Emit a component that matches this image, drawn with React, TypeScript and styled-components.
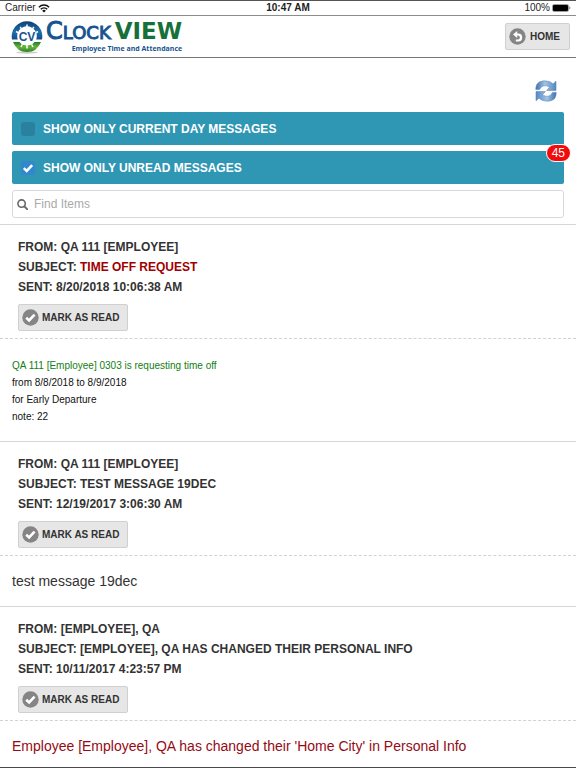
import React, { useState } from "react";
import styled, { createGlobalStyle } from "styled-components";

const GlobalStyle = createGlobalStyle`
  *, *::before, *::after { box-sizing: border-box; }
  body {
    margin: 0;
    background: #fff;
    color: #333;
    font-family: "Liberation Sans", Arial, sans-serif;
  }
  p, h2 { margin: 0; font: inherit; }
`;

const Shell = styled.div`
  height: 100vh;
  display: flex;
  flex-direction: column;
  border-top: 1px solid #555;
  border-bottom: 1px solid #4a4a4d;
`;

const StatusBar = styled.div`
  flex: none;
  height: 15px;
  display: grid;
  grid-template-columns: 1fr auto 1fr;
  align-items: center;
  padding: 0 5px;
  border-bottom: 1px solid #8c8c8c;
  color: #222;
  font-size: 10px;
  line-height: 14px;
`;

const StatusSide = styled.div<{ $end?: boolean }>`
  display: flex;
  align-items: center;
  justify-content: ${(p) => (p.$end ? "flex-end" : "flex-start")};
  gap: 2px;
`;

const Header = styled.header`
  flex: none;
  height: 42px;
  display: flex;
  align-items: center;
  justify-content: space-between;
  padding: 0 6px 0 11px;
  border-bottom: 1px solid #777;
`;

const Brand = styled.a`
  display: flex;
  align-items: center;
  gap: 3px;
  text-decoration: none;
`;

const BrandText = styled.span`
  display: flex;
  flex-direction: column;
  align-items: flex-end;
`;

const WordMark = styled.span`
  display: flex;
  align-items: baseline;
  font-family: "DejaVu Sans", sans-serif;
  font-size: 24px;
  line-height: 23px;
  color: #17548f;
  -webkit-text-stroke: 1px currentColor;
`;

const WordSmall = styled.span`
  font-size: 18px;
`;

const WordGreen = styled.span`
  padding-left: 4px;
  color: #17703a;
  font-size: 23px;
  font-weight: 700;
  -webkit-text-stroke: 0;
`;

const TagLine = styled.span`
  color: #17548f;
  font-family: "Open Sans", sans-serif;
  font-weight: 700;
  font-size: 7px;
  line-height: 10px;
`;

const GreyButton = styled.button<{ $roomy?: boolean }>`
  display: inline-flex;
  align-items: center;
  gap: ${(p) => (p.$roomy ? 4 : 3)}px;
  height: 27px;
  padding: 0 ${(p) => (p.$roomy ? 9 : 8)}px 0 3px;
  border: 1px solid #d0d0d0;
  border-radius: 2px;
  background: #e6e6e6;
  color: #333;
  font: 700 10px/16px "Liberation Sans", Arial, sans-serif;
  text-transform: uppercase;
  cursor: pointer;
`;

const Main = styled.main`
  flex: 1;
  min-height: 0;
  overflow-y: auto;
  scrollbar-width: none;
`;

const Tools = styled.div`
  display: flex;
  flex-direction: column;
  gap: 6px;
  padding: 22px 12px 6px;
`;

const RefreshButton = styled.button`
  align-self: flex-end;
  display: flex;
  margin: 0 7px 4px 0;
  padding: 0;
  border: 0;
  background: none;
  cursor: pointer;
`;

const Filter = styled.label`
  position: relative;
  display: flex;
  align-items: center;
  gap: 8px;
  height: 33px;
  padding: 0 9px;
  border-radius: 2px;
  background: #2f96b4;
  color: #fff;
  font-size: 12px;
  font-weight: 700;
  line-height: 20px;
  text-transform: uppercase;
  cursor: pointer;
`;

const Tick = styled.span`
  display: grid;
  width: 14px;
  height: 14px;
  > * { grid-area: 1 / 1; }
  > svg { pointer-events: none; }
`;

const TickInput = styled.input`
  appearance: none;
  width: 14px;
  height: 14px;
  margin: 0;
  border-radius: 3px;
  background: #2a819f;
  &:checked { background: #3288cd; }
`;

const Badge = styled.span`
  position: absolute;
  top: -7px;
  right: -7px;
  padding: 0 5px;
  border: 1px solid #fff;
  border-radius: 9px;
  background: #f30a0a;
  font-size: 12px;
  font-weight: 400;
  line-height: 16px;
`;

const Search = styled.label`
  display: flex;
  align-items: center;
  gap: 6px;
  height: 28px;
  padding: 0 4px;
  border: 1px solid #d8d8d8;
  border-radius: 3px;
  svg { flex: none; }
`;

const SearchInput = styled.input`
  flex: 1;
  min-width: 0;
  padding: 0;
  border: 0;
  outline: 0;
  background: none;
  color: #333;
  font: 12px/20px "Liberation Sans", Arial, sans-serif;
  &::placeholder { color: #aaa; opacity: 1; }
`;

const Message = styled.article`
  border-top: 1px solid #d6d6d6;
`;

const MessageHead = styled.div`
  padding: 12px 18px 7px;
  border-bottom: 1px dashed #d2d2d2;
  font-size: 12px;
  font-weight: 700;
  line-height: 20px;
  text-transform: uppercase;
`;

const Mark = styled.em`
  color: #a00000;
  font-style: normal;
`;

const Actions = styled.div`
  display: flex;
  padding-top: 7px;
`;

const MessageBody = styled.div<{ $tone?: "alert" }>`
  padding: 15px 12px;
  color: ${(p) => (p.$tone === "alert" ? "#960a14" : "#333")};
  font-size: 14px;
  line-height: 20px;
`;

const RequestBody = styled.div`
  padding: 18px 12px 16px;
  color: #111;
  font-size: 10px;
  line-height: 17px;
`;

const RequestTitle = styled.p`
  color: #128012;
`;

const WifiIcon = () => (
  <svg width="12" height="9" viewBox="0 0 12 9" fill="none" stroke="#111" strokeWidth="1.5" aria-hidden="true">
    <path d="M.9 3.2a7.3 7.3 0 0 1 10.2 0" />
    <path d="M2.8 5.2a4.6 4.6 0 0 1 6.4 0" />
    <path d="M6 8.6 4.2 6.7a2.6 2.6 0 0 1 3.6 0Z" fill="#111" stroke="none" />
  </svg>
);

const BatteryIcon = () => (
  <svg width="19" height="8" viewBox="0 0 19 8" aria-hidden="true">
    <rect x=".5" y=".5" width="16" height="7" rx="1.5" fill="none" stroke="#777" strokeWidth=".7" />
    <rect x="1" y="1" width="15" height="6" rx="1" fill="#000" />
    <path d="M17.4 2.6v2.8q1-.4 1-1.4t-1-1.4Z" fill="#666" />
  </svg>
);

const LogoIcon = () => (
  <svg width="32" height="34" viewBox="0 0 32 34" aria-hidden="true">
    <defs>
      <linearGradient id="blue" x1="0" y1="0" x2="0" y2="1">
        <stop offset="0" stopColor="#0e3f78" />
        <stop offset=".6" stopColor="#1d70ad" />
        <stop offset="1" stopColor="#124b85" />
      </linearGradient>
      <linearGradient id="green" x1="0" y1="0" x2="0" y2="1">
        <stop offset="0" stopColor="#257a2d" />
        <stop offset=".5" stopColor="#67b53a" />
        <stop offset="1" stopColor="#2d7f2d" />
      </linearGradient>
    </defs>
    <ellipse cx="16" cy="32.500" rx="11" ry="1.200" fill="#c9cfc4" />
    <path d="M1 19.500A15.300 15.300 0 1 1 31 19.500H25.200A9.800 9.800 0 1 0 6.800 19.500Z" fill="url(#blue)" />
    <path d="M2 22H8.600Q11 25.500 16 25.500T23.400 22H30Q26 32 16 32T2 22Z" fill="url(#green)" />
    <path d="M16 4.500v3.500M9.200 6.800l1.700 2.800M22.800 6.800l-1.700 2.800M5 11.500l3 1.600M27 11.500l-3 1.600M16 28.500v-3.500M10 27l1.400-2.600M22 27l-1.400-2.600" stroke="#fff" strokeWidth="1.500" />
    <text x="16" y="20.500" textAnchor="middle" fill="#17548f" fontFamily="Liberation Sans, sans-serif" fontSize="12" fontWeight="700">CV</text>
  </svg>
);

const BackIcon = () => (
  <svg width="17" height="17" viewBox="0 0 17 17" aria-hidden="true">
    <circle cx="8.500" cy="8.500" r="8.200" fill="#858585" />
    <path d="M4 6.500 8.200 2.900V5.600H9.300A3.900 3.900 0 0 1 9.300 13.400H6.800V11.500H9.300A2.050 2.050 0 0 0 9.300 7.500H8.200V10.100Z" fill="#fff" />
  </svg>
);

const CheckIcon = () => (
  <svg width="17" height="17" viewBox="0 0 17 17" aria-hidden="true">
    <circle cx="8.500" cy="8.500" r="8.200" fill="#858585" />
    <path d="m4.200 8.800 2.900 2.700 5.500-5.900" fill="none" stroke="#fff" strokeWidth="2.600" />
  </svg>
);

const TickMark = () => (
  <svg width="14" height="14" viewBox="0 0 14 14" aria-hidden="true">
    <path d="m2.800 7.200 2.900 2.700 5.500-5.700" fill="none" stroke="#fff" strokeWidth="2.500" />
  </svg>
);

const SearchIcon = () => (
  <svg width="11" height="11" viewBox="0 0 11 11" fill="none" stroke="#666" aria-hidden="true">
    <circle cx="4.600" cy="4.600" r="3.700" strokeWidth="1.600" />
    <path d="m7.400 7.400 2.700 2.700" strokeWidth="1.900" strokeLinecap="round" />
  </svg>
);

const RefreshIcon = () => (
  <svg width="22" height="22" viewBox="0 0 22 22" aria-hidden="true">
    <defs>
      <linearGradient id="arrow" x1="0" y1="0" x2="1" y2="0">
        <stop offset="0" stopColor="#3f6fae" />
        <stop offset=".45" stopColor="#a3c4e4" />
        <stop offset="1" stopColor="#5288c2" />
      </linearGradient>
    </defs>
    <g fill="url(#arrow)" stroke="#5a86ba" strokeWidth=".6" strokeLinejoin="round">
      <path d="M.8 9.600Q.8 3.500 4.800 1.800T12.500 1.200Q15.600 1.500 18 3.900L21 1.300V10.400H11.600L14.600 7.300Q11.400 4.900 8 5.900Q5.700 6.700 4.600 9.600Z" />
      <path d="M.8 9.600Q.8 3.500 4.800 1.800T12.500 1.200Q15.600 1.500 18 3.900L21 1.300V10.400H11.600L14.600 7.300Q11.400 4.900 8 5.900Q5.700 6.700 4.600 9.600Z" transform="rotate(180 11 11)" />
    </g>
  </svg>
);

interface MessageData {
  from: string;
  subject: React.ReactNode;
  sent: string;
  body: React.ReactNode;
}

const messages: MessageData[] = [
  {
    from: "QA 111 [Employee]",
    subject: <Mark>Time Off Request</Mark>,
    sent: "8/20/2018 10:06:38 AM",
    body: (
      <RequestBody>
        <RequestTitle>QA 111 [Employee] 0303 is requesting time off</RequestTitle>
        <p>from 8/8/2018 to 8/9/2018</p>
        <p>for Early Departure</p>
        <p>note: 22</p>
      </RequestBody>
    ),
  },
  {
    from: "QA 111 [Employee]",
    subject: "Test message 19dec",
    sent: "12/19/2017 3:06:30 AM",
    body: <MessageBody>test message 19dec</MessageBody>,
  },
  {
    from: "[Employee], QA",
    subject: "[Employee], QA has changed their Personal Info",
    sent: "10/11/2017 4:23:57 PM",
    body: (
      <MessageBody $tone="alert">
        Employee [Employee], QA has changed their 'Home City' in Personal Info
      </MessageBody>
    ),
  },
];

export default function App() {
  const [today, setToday] = useState(false);
  const [unread, setUnread] = useState(true);

  return (
    <>
      <GlobalStyle />
      <Shell>
        <StatusBar>
          <StatusSide>
            Carrier
            <WifiIcon />
          </StatusSide>
          <strong>10:47 AM</strong>
          <StatusSide $end>
            100%
            <BatteryIcon />
          </StatusSide>
        </StatusBar>
        <Header>
          <Brand href="#">
            <LogoIcon />
            <BrandText>
              <WordMark>
                C<WordSmall>LOCK</WordSmall>
                <WordGreen>VIEW</WordGreen>
              </WordMark>
              <TagLine>Employee Time and Attendance</TagLine>
            </BrandText>
          </Brand>
          <GreyButton type="button" $roomy>
            <BackIcon />
            Home
          </GreyButton>
        </Header>
        <Main>
          <Tools>
            <RefreshButton type="button" aria-label="Refresh">
              <RefreshIcon />
            </RefreshButton>
            <Filter>
              <Tick>
                <TickInput type="checkbox" checked={today} onChange={(e) => setToday(e.target.checked)} />
                {today && <TickMark />}
              </Tick>
              Show only current day messages
            </Filter>
            <Filter>
              <Tick>
                <TickInput type="checkbox" checked={unread} onChange={(e) => setUnread(e.target.checked)} />
                {unread && <TickMark />}
              </Tick>
              Show only unread messages
              <Badge>45</Badge>
            </Filter>
            <Search>
              <SearchIcon />
              <SearchInput type="text" placeholder="Find Items" aria-label="Find Items" />
            </Search>
          </Tools>
          {messages.map((m) => (
            <Message key={m.sent}>
              <MessageHead>
                <p>From: {m.from}</p>
                <h2>Subject: {m.subject}</h2>
                <p>Sent: {m.sent}</p>
                <Actions>
                  <GreyButton type="button">
                    <CheckIcon />
                    Mark as read
                  </GreyButton>
                </Actions>
              </MessageHead>
              {m.body}
            </Message>
          ))}
        </Main>
      </Shell>
    </>
  );
}
